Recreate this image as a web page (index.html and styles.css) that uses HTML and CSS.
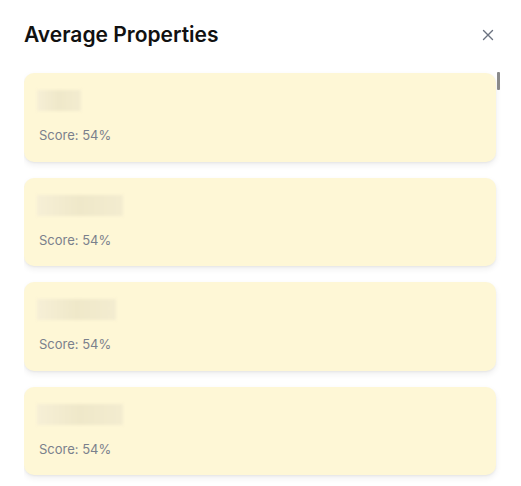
FILE: index.html
```html
<!DOCTYPE html>
<html>
<head>
<meta charset="utf-8">
<link rel="stylesheet" href="styles.css">
</head>
<body>
<div class="modal">
  <div class="header">
    <h2 class="title">Average Properties</h2>
    <button class="close" aria-label="Close">
      <svg width="12" height="12" viewBox="0 0 12 12"><path d="M1.5 1.5 L10.5 10.5 M10.5 1.5 L1.5 10.5" stroke="#6b7280" stroke-width="1.4" stroke-linecap="round" fill="none"/></svg>
    </button>
  </div>
  <div class="list-wrap">
    <div class="list">
      <div class="card"><div class="name w1"></div><div class="score">Score: 54%</div></div>
      <div class="card"><div class="name w2"></div><div class="score">Score: 54%</div></div>
      <div class="card"><div class="name w3"></div><div class="score">Score: 54%</div></div>
      <div class="card"><div class="name w2"></div><div class="score">Score: 54%</div></div>
    </div>
    <div class="thumb"></div>
  </div>
</div>
</body>
</html>
```

FILE: styles.css
```css
html, body {
  margin: 0;
  padding: 0;
  background: #ffffff;
  font-family: Inter, "Noto Sans", sans-serif;
  overflow: hidden;
}
.modal {
  width: 521px;
  height: 486px;
  box-sizing: border-box;
  padding: 0 0 0 24px;
  display: flex;
  flex-direction: column;
}
.header {
  display: flex;
  align-items: center;
  justify-content: space-between;
  height: 70px;
  padding-right: 27px;
  box-sizing: border-box;
}
.title {
  margin: 0;
  font-size: 21px;
  font-weight: 600;
  color: #111111;
  letter-spacing: 0;
  line-height: 28px;
}
.close {
  border: 0;
  background: none;
  padding: 0;
  width: 12px;
  height: 12px;
  display: flex;
}
.list-wrap {
  position: relative;
  flex: 1;
  overflow: hidden;
  padding-top: 3px;
}
.list {
  display: flex;
  flex-direction: column;
  gap: 16px;
  width: 472px;
}
.card {
  background: #fef7d6;
  border-radius: 10px;
  box-shadow: 0 3px 6px rgba(0,0,0,0.07), 0 1px 2px rgba(0,0,0,0.05);
  padding: 17px 16px 16.5px 13px;
  display: flex;
  flex-direction: column;
  gap: 14px;
}
.name {
  height: 21px;
  background: linear-gradient(90deg, #f6efd6, #efe8c9 50%, #f3ecd0);
  filter: blur(1.5px);
}
.w1 { width: 44px; }
.w2 { width: 86px; }
.w3 { width: 79px; }
.score {
  font-size: 13px;
  line-height: 20px;
  color: #7a808c;
  padding-left: 2px;
}
.thumb {
  position: absolute;
  left: 473px;
  top: 2px;
  width: 3px;
  height: 18px;
  border-radius: 1px;
  background: #8a8a8a;
}
```
